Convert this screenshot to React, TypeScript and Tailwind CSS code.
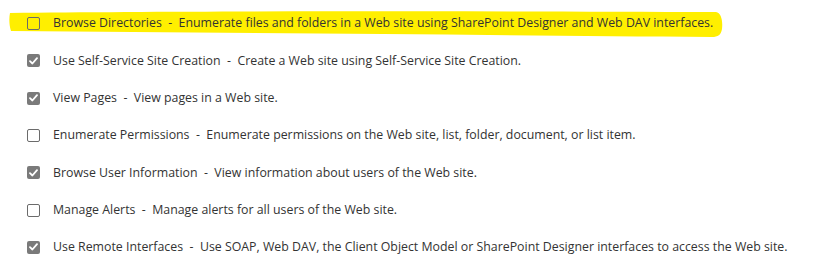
import React from 'react'

interface Permission {
    name: string
    description: string
    checked: boolean
}

const permissions: Permission[] = [
    { name: 'Browse Directories', description: 'Enumerate files and folders in a Web site using SharePoint Designer and Web DAV interfaces.', checked: false },
    { name: 'Use Self-Service Site Creation', description: 'Create a Web site using Self-Service Site Creation.', checked: true },
    { name: 'View Pages', description: 'View pages in a Web site.', checked: true },
    { name: 'Enumerate Permissions', description: 'Enumerate permissions on the Web site, list, folder, document, or list item.', checked: false },
    { name: 'Browse User Information', description: 'View information about users of the Web site.', checked: true },
    { name: 'Manage Alerts', description: 'Manage alerts for all users of the Web site.', checked: false },
    { name: 'Use Remote Interfaces', description: 'Use SOAP, Web DAV, the Client Object Model or SharePoint Designer interfaces to access the Web site.', checked: true },
]

function Checkbox({ checked }: { checked: boolean }) {
    if (checked) {
        return (
            <span className="flex h-[13px] w-[13px] shrink-0 items-center justify-center rounded-[2px] bg-[#7a7a7a]">
                <svg width="9" height="8" viewBox="0 0 9 8" fill="none">
                    <path d="M1 4.2 L3.4 6.5 L8 1.2" stroke="white" strokeWidth="1.8" strokeLinecap="round" strokeLinejoin="round" />
                </svg>
            </span>
        )
    }
    return <span className="h-[13px] w-[13px] shrink-0 rounded-[2px] border border-[#6b6b6b] bg-transparent" />
}

// yellow marker stroke behind the first row
function Highlight() {
    return (
        <svg className="pointer-events-none absolute left-0 top-0" width="824" height="45" viewBox="0 0 824 45">
            <path
                d="M10 13 C 200 11, 500 11, 716 12 C 721 13, 723 20, 722 29 C 721 35, 718 37, 712 37 C 500 35, 250 33, 11 31 C 9 25, 9 18, 10 13 Z"
                fill="#ffef00"
            />
        </svg>
    )
}

export default function App() {
    return (
        <div className="relative h-[273px] w-[824px] overflow-hidden bg-white" style={{ fontFamily: '"Open Sans", "Noto Sans", sans-serif' }}>
            <Highlight />
            <ul className="relative flex flex-col pt-[5px]">
                {permissions.map((p) => (
                    <li key={p.name} className="flex h-[37.3px] items-center pl-[27px]">
                        <Checkbox checked={p.checked} />
                        <span className="ml-[13px] whitespace-nowrap text-[12.35px] text-[#333333]">
                            {p.name}&nbsp; -&nbsp; {p.description}
                        </span>
                    </li>
                ))}
            </ul>
        </div>
    )
}
